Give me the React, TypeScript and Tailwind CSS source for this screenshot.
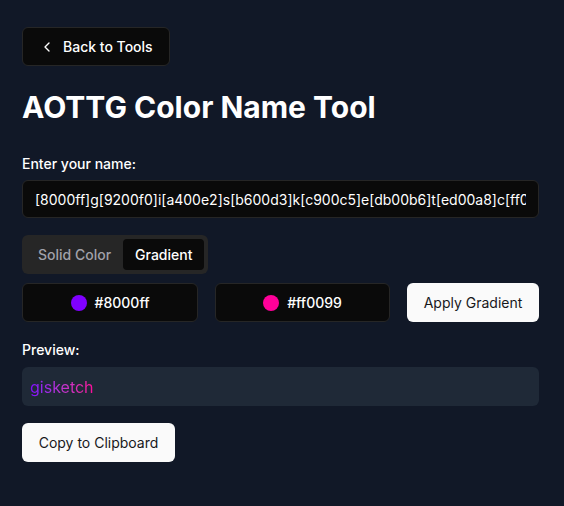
import React, { useState } from "react";
import { ChevronLeft } from "lucide-react";

const NAME = "[8000ff]g[9200f0]i[a400e2]s[b600d3]k[c900c5]e[db00b6]t[ed00a8]c[ff0099]h";

export default function App() {
  const [mode, setMode] = useState<"solid" | "gradient">("gradient");
  const [from] = useState("#8000ff");
  const [to] = useState("#ff0099");
  const plain = NAME.replace(/\[[0-9a-f]{6}\]/gi, "");

  return (
    <div className="min-h-screen bg-[#111827] text-white font-['Inter',sans-serif] px-[22px] pt-[27px] pb-10">
      <div className="w-[517px] flex flex-col">
        <button className="self-start flex items-center gap-2 h-[39px] px-4 rounded-md bg-[#0a0a0a] border border-[#262626] text-sm font-medium">
          <ChevronLeft size={16} />
          Back to Tools
        </button>

        <h1 className="mt-[23px] text-3xl leading-9 font-bold">AOTTG Color Name Tool</h1>

        <label className="mt-[29px] text-sm leading-5 font-medium">Enter your name:</label>
        <input
          readOnly
          value={NAME}
          className="mt-[6px] h-[38px] w-full rounded-md bg-[#0a0a0a] border border-[#262626] px-3 text-sm text-white outline-none"
        />

        <div className="mt-[17px] self-start flex items-center h-[39px] px-1 rounded-md bg-[#262626]">
          <button
            onClick={() => setMode("solid")}
            className={
              mode === "solid"
                ? "h-[31px] px-3 rounded bg-[#0a0a0a] text-sm font-medium text-white"
                : "h-[31px] px-3 rounded text-sm font-medium text-[#a1a1aa]"
            }
          >
            Solid Color
          </button>
          <button
            onClick={() => setMode("gradient")}
            className={
              mode === "gradient"
                ? "h-[31px] px-3 rounded bg-[#0a0a0a] text-sm font-medium text-white"
                : "h-[31px] px-3 rounded text-sm font-medium text-[#a1a1aa]"
            }
          >
            Gradient
          </button>
        </div>

        <div className="mt-[9px] flex items-center gap-[17px]">
          <button className="w-[176px] h-[39px] flex items-center justify-center gap-2 rounded-md bg-[#0a0a0a] border border-[#262626] text-sm font-medium">
            <span className="w-4 h-4 rounded-full" style={{ backgroundColor: from }} />
            {from}
          </button>
          <button className="w-[175px] h-[39px] flex items-center justify-center gap-2 rounded-md bg-[#0a0a0a] border border-[#262626] text-sm font-medium">
            <span className="w-4 h-4 rounded-full" style={{ backgroundColor: to }} />
            {to}
          </button>
          <button className="w-[132px] h-[39px] rounded-md bg-[#fafafa] text-[#18181b] text-sm">
            Apply Gradient
          </button>
        </div>

        <label className="mt-[18px] text-sm leading-5 font-medium">Preview:</label>
        <div className="mt-[7px] h-[39px] w-full rounded-md bg-[#1f2937] px-2 flex items-center text-base">
          <span
            className="bg-clip-text text-transparent"
            style={{ backgroundImage: `linear-gradient(to right in oklab, ${from}, ${to})` }}
          >
            {plain}
          </span>
        </div>

        <button className="mt-[17px] self-start w-[153px] h-[39px] rounded-md bg-[#fafafa] text-[#18181b] text-sm">
          Copy to Clipboard
        </button>
      </div>
    </div>
  );
}
